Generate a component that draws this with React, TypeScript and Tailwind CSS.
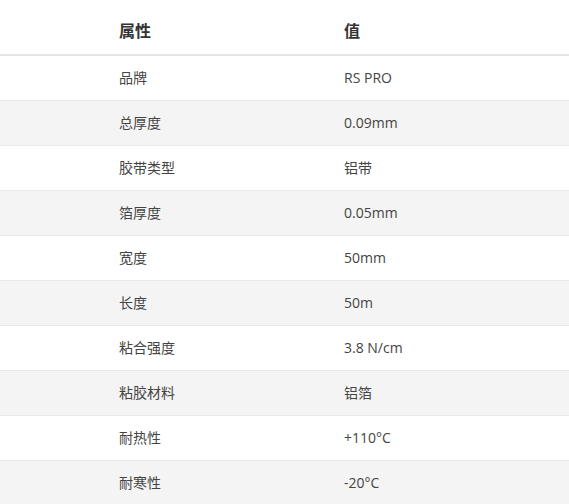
const rows: Array<[string, string]> = [
  ["品牌", "RS PRO"],
  ["总厚度", "0.09mm"],
  ["胶带类型", "铝带"],
  ["箔厚度", "0.05mm"],
  ["宽度", "50mm"],
  ["长度", "50m"],
  ["粘合强度", "3.8 N/cm"],
  ["粘胶材料", "铝箔"],
  ["耐热性", "+110°C"],
  ["耐寒性", "-20°C"],
];

export default function App() {
  return (
    <div
      className="min-h-screen bg-white text-[#333]"
      style={{ fontFamily: '"Open Sans", "Noto Sans CJK SC", sans-serif' }}
    >
      <table className="w-full border-collapse">
        <thead>
          <tr className="border-b-2 border-[#e6e6e6]">
            <th className="w-[344px] pl-[119px] pt-[21px] pb-[13px] text-left text-[16px] leading-[20px] font-bold">
              属性
            </th>
            <th className="pt-[21px] pb-[13px] text-left text-[16px] leading-[20px] font-bold">值</th>
          </tr>
        </thead>
        <tbody>
          {rows.map(([k, v], i) => (
            <tr
              key={k}
              className={`border-b border-[#e9e9e9] ${i % 2 === 1 ? "bg-[#f4f4f4]" : "bg-white"}`}
            >
              <td className="h-[45px] pl-[119px] text-[14px] leading-[20px] text-[#444]">{k}</td>
              <td className="h-[45px] text-[14px] leading-[20px] text-[#444]">{v}</td>
            </tr>
          ))}
        </tbody>
      </table>
    </div>
  );
}
